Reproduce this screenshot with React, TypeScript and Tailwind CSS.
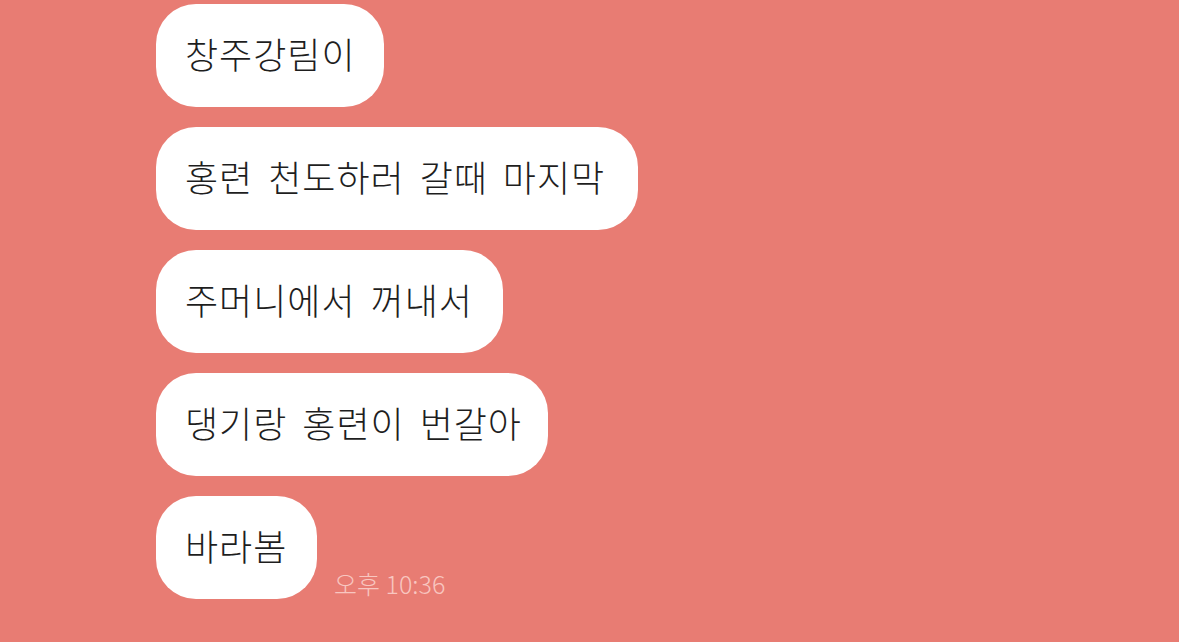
const messages = [
  { text: '창주강림이', width: 'w-[228px]' },
  { text: '홍련 천도하러 갈때 마지막', width: 'w-[482px]' },
  { text: '주머니에서 꺼내서', width: 'w-[347px]' },
  { text: '댕기랑 홍련이 번갈아', width: 'w-[392px]' },
];

function Bubble({ text, width }: { text: string; width: string }) {
  return (
    <div
      className={`${width} flex h-[103px] items-center rounded-[40px] bg-white pl-[29px] text-[36px] font-light text-[#1e1e1e]`}
    >
      <span className="-mt-[6px] whitespace-nowrap leading-none tracking-[1px] [word-spacing:6px]">
        {text}
      </span>
    </div>
  );
}

export default function App() {
  return (
    <div
      className="h-[642px] w-[1179px] overflow-hidden bg-[#e87c73] pl-[156px] pt-[4px]"
      style={{ fontFamily: '"Noto Sans CJK KR", "Noto Sans", sans-serif' }}
    >
      <div className="flex flex-col gap-[20px]">
        {messages.map((m) => (
          <Bubble key={m.text} text={m.text} width={m.width} />
        ))}
        <div className="flex items-end">
          <Bubble text="바라봄" width="w-[161px]" />
          <span className="mb-[3px] ml-[17px] text-[25px] font-light leading-none text-[#f8c6c0]">
            오후 10:36
          </span>
        </div>
      </div>
    </div>
  );
}
